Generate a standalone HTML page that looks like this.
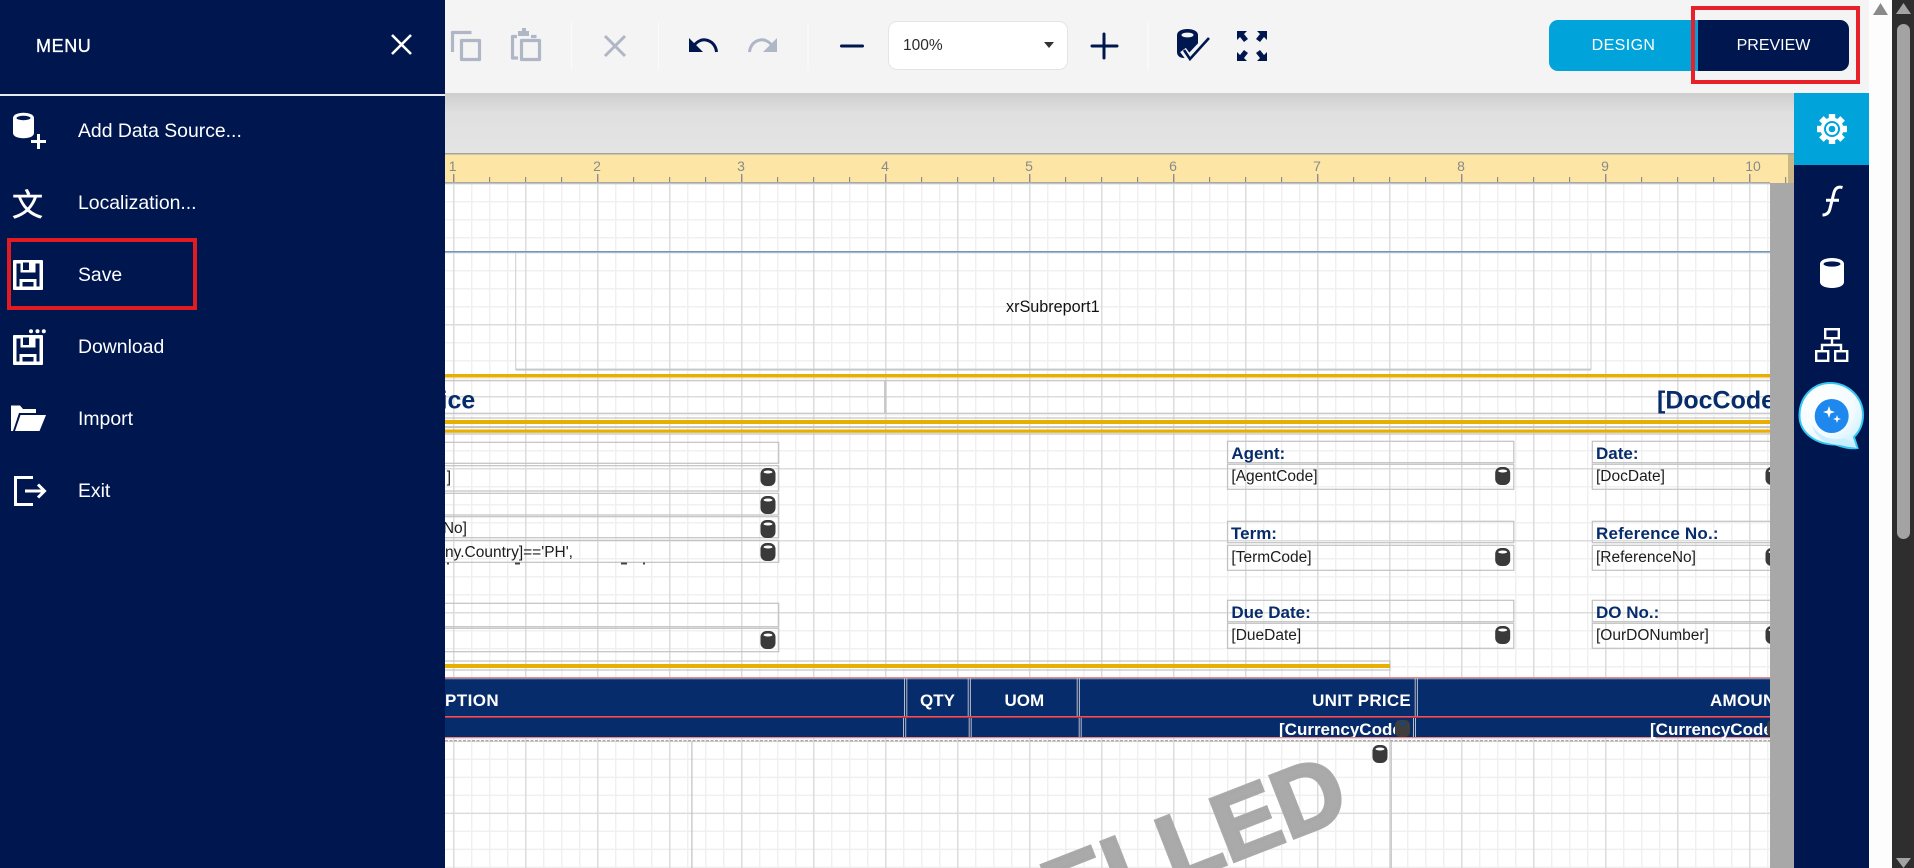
<!DOCTYPE html>
<html lang="en">
<head>
<meta charset="utf-8">
<title>Report Designer</title>
<style>
html,body{margin:0;padding:0;width:1914px;height:868px;overflow:hidden;background:#fdfdfd;font-family:"Liberation Sans",sans-serif}
#stage{position:absolute;left:0;top:0;width:1914px;height:868px;overflow:hidden}
svg.root{position:absolute;left:0;top:0}
#panel{position:absolute;left:0;top:0;width:445px;height:868px;background:#00164f;color:#fff}
#panel .hr{position:absolute;left:0;top:94px;width:445px;height:1.5px;background:#e8eaf0}
#panel .t{position:absolute;left:36px;top:31px;line-height:30px;font-size:18px;letter-spacing:.6px;-webkit-text-stroke:.35px #fff}
#panel .i{position:absolute;left:78px;height:30px;line-height:30px;font-size:19.4px;white-space:nowrap}
#panel svg{position:absolute;left:0;top:0}
#panel .zh{position:absolute;left:12px;top:183px;font-family:"Noto Sans CJK SC",sans-serif;font-size:31px;line-height:40px;-webkit-text-stroke:.5px #fff}
#savebox{position:absolute;left:6.5px;top:238px;width:182px;height:64px;border:4px solid #e01b22}
#prevbox{position:absolute;left:1691px;top:6px;width:161px;height:70px;border:4px solid #e8202a}
.btn{position:absolute;top:20px;height:51px;line-height:51px;text-align:center;color:#fff;font-size:16px}
#design{left:1549px;width:149px;background:#00a4db;border-radius:9px 0 0 9px;letter-spacing:.4px}
#preview{left:1698px;width:151px;background:#00164f;border-radius:0 9px 9px 0}
#zoombox{position:absolute;left:888px;top:21px;width:178px;height:47px;background:#fff;border:1px solid #e4e4e4;border-radius:9px;line-height:47px;font-size:15.5px;color:#2a2a2a;text-indent:14px}
</style>
</head>
<body>
<div id="stage">
<svg class="root" width="1914" height="868" viewBox="0 0 1914 868" xmlns="http://www.w3.org/2000/svg">
<defs>
<linearGradient id="topg" x1="0" y1="0" x2="0" y2="1"><stop offset="0" stop-color="#cecece"/><stop offset=".35" stop-color="#e0e0e0"/><stop offset="1" stop-color="#e4e4e4"/></linearGradient>
<radialGradient id="qg" cx=".35" cy=".3" r=".85"><stop offset="0" stop-color="#ffffff"/><stop offset=".6" stop-color="#f2fbff"/><stop offset="1" stop-color="#c4eeff"/></radialGradient>
<pattern id="g1" patternUnits="userSpaceOnUse" x="453" y="183" width="72" height="72">
<rect x="18" width="1.5" height="72" fill="#f0f0f0"/><rect x="36" width="1.5" height="72" fill="#f0f0f0"/><rect x="54" width="1.5" height="72" fill="#f0f0f0"/>
<rect y="18" width="72" height="1.5" fill="#f0f0f0"/><rect y="36" width="72" height="1.5" fill="#f0f0f0"/><rect y="54" width="72" height="1.5" fill="#f0f0f0"/>
<rect width="72" height="1.5" fill="#dcdcdc"/><rect width="1.5" height="72" fill="#dcdcdc"/></pattern>
<pattern id="g2" patternUnits="userSpaceOnUse" x="453" y="252" width="72" height="72">
<rect x="18" width="1.5" height="72" fill="#f0f0f0"/><rect x="36" width="1.5" height="72" fill="#f0f0f0"/><rect x="54" width="1.5" height="72" fill="#f0f0f0"/>
<rect y="18" width="72" height="1.5" fill="#f0f0f0"/><rect y="36" width="72" height="1.5" fill="#f0f0f0"/><rect y="54" width="72" height="1.5" fill="#f0f0f0"/>
<rect width="72" height="1.5" fill="#dcdcdc"/><rect width="1.5" height="72" fill="#dcdcdc"/></pattern>
<pattern id="g4" patternUnits="userSpaceOnUse" x="453" y="740.6" width="72" height="72">
<rect x="18" width="1.5" height="72" fill="#f0f0f0"/><rect x="36" width="1.5" height="72" fill="#f0f0f0"/><rect x="54" width="1.5" height="72" fill="#f0f0f0"/>
<rect y="18" width="72" height="1.5" fill="#f0f0f0"/><rect y="36" width="72" height="1.5" fill="#f0f0f0"/><rect y="54" width="72" height="1.5" fill="#f0f0f0"/>
<rect width="72" height="1.5" fill="#dcdcdc"/><rect width="1.5" height="72" fill="#dcdcdc"/></pattern>
<pattern id="tmin" patternUnits="userSpaceOnUse" x="453" y="177" width="36" height="6"><rect width="1.2" height="6" fill="#8d8d8d"/></pattern>
<pattern id="tmaj" patternUnits="userSpaceOnUse" x="453" y="174" width="144" height="9"><rect width="1.4" height="9" fill="#8d8d8d"/></pattern>
<clipPath id="cv"><rect x="445" y="183" width="1325" height="685"/></clipPath>
<clipPath id="cc1"><rect x="1270" y="718" width="125" height="19"/></clipPath>
<symbol id="db" viewBox="0 0 15 18" overflow="visible"><rect width="15" height="18" rx="6" fill="#3a3a3a"/><ellipse cx="7.5" cy="4" rx="4.5" ry="1.5" fill="#fff"/></symbol>
</defs>

<!-- top band -->
<rect x="445" y="93" width="1349" height="60" fill="url(#topg)"/>
<rect x="445" y="0" width="1424" height="93" fill="#f4f4f4"/>

<!-- canvas -->
<rect x="445" y="183" width="1325" height="685" fill="#fff"/>
<rect x="445" y="183" width="1325" height="69" fill="url(#g1)"/>
<rect x="445" y="252" width="1325" height="425" fill="url(#g2)"/>
<rect x="445" y="677" width="1325" height="64" fill="url(#g2)"/>
<rect x="445" y="741" width="1325" height="127" fill="url(#g4)"/>
<rect x="1770" y="183" width="24" height="685" fill="#a8a8a8"/>

<g clip-path="url(#cv)">
<rect x="445" y="251" width="1325" height="1.5" fill="#6f96bd"/>
<!-- subreport -->
<path d="M515.7 252.5V369.5H1591V252.5" fill="none" stroke="#d2d2d2" stroke-width="1.1"/>
<rect x="515.7" y="368.6" width="1075.3" height="2" fill="#c8c8c8"/>
<text x="1006" y="312" font-size="16.2" fill="#111" font-family="Liberation Sans">xrSubreport1</text>

<!-- gold rules + title -->
<g fill="none" stroke="#c4c4c4" stroke-width="1.2">
<rect x="440" y="380.7" width="444.7" height="32.6"/>
<rect x="886" y="380.7" width="900" height="32.6"/>
<rect x="440" y="418" width="1340" height="8.7"/>
<rect x="440" y="427.5" width="1340" height="6.5"/>
<rect x="440" y="661" width="950" height="9"/>
</g>
<rect x="445" y="374" width="1325" height="3.5" fill="#e8ae00"/>
<rect x="445" y="420" width="1325" height="4" fill="#e8ae00"/>
<rect x="445" y="429.5" width="1325" height="3.2" fill="#e8ae00"/>
<rect x="445" y="664" width="945" height="4" fill="#e8ae00"/>
<text x="447.5" y="408.3" text-anchor="end" font-size="25" font-weight="bold" fill="#072c6b" font-family="Liberation Sans">Invoi</text>
<text x="447.5" y="408.3" font-size="25" font-weight="bold" fill="#072c6b" font-family="Liberation Sans">ce</text>
<text x="1657" y="408.3" font-size="25" font-weight="bold" fill="#072c6b" font-family="Liberation Sans">[DocCode]</text>

<!-- left fields -->
<g fill="none" stroke="#c2c2c2" stroke-width="1.2">
<rect x="430" y="442.3" width="348.7" height="21"/>
<rect x="430" y="465.7" width="348.7" height="25.3"/>
<rect x="430" y="493.3" width="348.7" height="21.7"/>
<rect x="430" y="516.7" width="348.7" height="21"/>
<rect x="430" y="540.3" width="348.7" height="22"/>
<rect x="430" y="603.3" width="348.7" height="23.4"/>
<rect x="430" y="628.3" width="348.7" height="23.4"/>
</g>
<g font-family="Liberation Sans" font-size="15.5" fill="#1c1c1c">
<text x="451" y="482" text-anchor="end">]</text>
<text x="467" y="533" text-anchor="end">[TaxNo]</text>
<text x="573" y="557" text-anchor="end">[Company.Country]=='PH',</text>
</g>
<g fill="#444"><rect x="447" y="562.5" width="2" height="2"/><rect x="515" y="562.5" width="5" height="2"/><rect x="621" y="562.5" width="6" height="2"/><rect x="643" y="562.5" width="2" height="2"/></g>
<use href="#db" x="760.5" y="468" width="15" height="18"/>
<use href="#db" x="760.5" y="496" width="15" height="18"/>
<use href="#db" x="760.5" y="520" width="15" height="18"/>
<use href="#db" x="760.5" y="543" width="15" height="18"/>
<use href="#db" x="760.5" y="631" width="15" height="18"/>

<!-- right fields -->
<g fill="none" stroke="#c2c2c2" stroke-width="1.2">
<rect x="1227.5" y="441.3" width="286.3" height="21.4"/><rect x="1227.5" y="464.3" width="286.3" height="25"/>
<rect x="1227.5" y="521.3" width="286.3" height="21.4"/><rect x="1227.5" y="545.3" width="286.3" height="25"/>
<rect x="1227.5" y="600.3" width="286.3" height="21.4"/><rect x="1227.5" y="623.3" width="286.3" height="25"/>
<rect x="1592.3" y="441.3" width="286.3" height="21.4"/><rect x="1592.3" y="464.3" width="286.3" height="25"/>
<rect x="1592.3" y="521.3" width="286.3" height="21.4"/><rect x="1592.3" y="545.3" width="286.3" height="25"/>
<rect x="1592.3" y="600.3" width="286.3" height="21.4"/><rect x="1592.3" y="623.3" width="286.3" height="25"/>
</g>
<g font-family="Liberation Sans" font-size="17" font-weight="bold" fill="#072c6b">
<text x="1231.4" y="459">Agent:</text>
<text x="1231" y="539">Term:</text>
<text x="1231.4" y="618">Due Date:</text>
<text x="1596" y="459">Date:</text>
<text x="1596" y="539" letter-spacing=".2">Reference No.:</text>
<text x="1596" y="618">DO No.:</text>
</g>
<g font-family="Liberation Sans" font-size="15.5" fill="#1c1c1c">
<text x="1231.4" y="481">[AgentCode]</text>
<text x="1231.4" y="562">[TermCode]</text>
<text x="1231.4" y="640">[DueDate]</text>
<text x="1596" y="481">[DocDate]</text>
<text x="1596" y="562">[ReferenceNo]</text>
<text x="1596" y="640">[OurDONumber]</text>
</g>
<use href="#db" x="1495.2" y="467" width="15" height="18"/>
<use href="#db" x="1495.2" y="548" width="15" height="18"/>
<use href="#db" x="1495.2" y="626" width="15" height="18"/>
<use href="#db" x="1765.5" y="467" width="15" height="18"/>
<use href="#db" x="1765.5" y="548" width="15" height="18"/>
<use href="#db" x="1765.5" y="626" width="15" height="18"/>

<!-- table header -->
<rect x="445" y="678" width="1325" height="59.5" fill="#072c6b"/>
<rect x="445" y="677" width="1325" height="1.3" fill="#e98a8a"/>
<rect x="445" y="678.3" width="1325" height="1" fill="#8f9bb5"/>
<rect x="445" y="716" width="1325" height="1.6" fill="#ff4a4a"/>
<rect x="445" y="737" width="1325" height="1.2" fill="#e98a8a"/>
<line x1="445" y1="740.7" x2="1770" y2="740.7" stroke="#aaa" stroke-width="1.5" stroke-dasharray="3 1.5"/>
<g stroke="#b8bcc8" stroke-width="1">
<path d="M904.5 678V716M906.8 678V716M968.2 678V716M970.4 678V716M1077.2 678V716M1079.4 678V716M1415.2 678V716M1417.4 678V716"/>
<path d="M903.5 718V737M905.7 718V737M969.2 718V737M971.2 718V737M1079.2 718V737M1081.2 718V737M1413.5 718V737M1415.5 718V737"/>
</g>
<g font-family="Liberation Sans" font-size="17" font-weight="bold" fill="#fff">
<text x="499" y="706" text-anchor="end" letter-spacing=".4">DESCRIPTION</text>
<text x="920" y="706">QTY</text>
<text x="1004.5" y="706">UOM</text>
<text x="1411" y="706" text-anchor="end" letter-spacing=".25">UNIT PRICE</text>
<text x="1710" y="706" letter-spacing=".25">AMOUNT</text>
<text x="1279" y="735" clip-path="url(#cc1)">[CurrencyCode]</text>
<text x="1650" y="735">[CurrencyCode]</text>
</g>
<rect x="1395" y="720" width="15" height="17" rx="5" fill="#3e3e3e"/><ellipse cx="1402.5" cy="723.5" rx="3.5" ry="1.4" fill="#0b4a8f"/>
<rect x="1767" y="720" width="15" height="17" rx="5" fill="#3e3e3e"/>

<!-- detail band -->
<rect x="691.3" y="741.5" width="1.2" height="127" fill="#c0c0c0"/>
<rect x="1390.6" y="741.5" width="1.2" height="127" fill="#c0c0c0"/>
<text transform="translate(1352.8 815) rotate(-21.3)" text-anchor="end" font-family="Liberation Sans" font-weight="bold" font-size="96" fill="#a8a8a8" stroke="#a8a8a8" stroke-width="3.5" fill-opacity=".98" stroke-opacity=".98">CANCELLED</text>
<use href="#db" x="1372.5" y="745" width="15" height="18"/>
</g>

<!-- ruler -->
<rect x="445" y="153" width="1343" height="30" fill="#fde5a6"/>
<rect x="1788" y="153" width="6" height="30" fill="#c9b78a"/>
<rect x="445" y="177" width="1343" height="6" fill="url(#tmin)"/>
<rect x="445" y="174" width="1343" height="9" fill="url(#tmaj)"/>
<rect x="445" y="153" width="1349" height="1.5" fill="#a3a3a3"/>
<rect x="445" y="182" width="1325" height="1.5" fill="#a9a9a9"/>
<g font-family="Liberation Sans" font-size="14" fill="#8a8a8a" text-anchor="middle">
<text x="452.7" y="171">1</text><text x="597" y="171">2</text><text x="741" y="171">3</text><text x="885" y="171">4</text><text x="1029" y="171">5</text><text x="1173" y="171">6</text><text x="1317" y="171">7</text><text x="1461" y="171">8</text><text x="1605" y="171">9</text><text x="1753" y="171">10</text>
</g>

<!-- toolbar separators -->
<g fill="#fbfbfb"><rect x="571" y="22" width="1" height="48"/><rect x="658" y="22" width="1" height="48"/><rect x="807.5" y="22" width="1" height="48"/><rect x="1147.5" y="22" width="1" height="48"/></g>

<!-- copy -->
<g fill="none" stroke="#afb6c6" stroke-width="3.2" stroke-linejoin="round">
<path d="M471.5 32.500H452.500V52"/>
<rect x="461.500" y="40.500" width="18" height="19"/>
<!-- paste -->
<path d="M517 36.500H512.500V58H518"/>
<path d="M531 36.500H536.500"/>
<rect x="521.500" y="40.500" width="18" height="19"/>
</g>
<path d="M522 28h4v3h3v5h-11v-5h4z" fill="#afb6c6"/>
<!-- x -->
<path d="M605 36L625 56M625 36L605 56" stroke="#afb6c6" stroke-width="3" fill="none"/>
<!-- undo / redo -->
<path d="M689 38v14h14z" fill="#00164f"/>
<path d="M693 47c3-5 8-8 13-7 6 1 10 6 10.500 12" fill="none" stroke="#00164f" stroke-width="3"/>
<path d="M777 38v14h-14z" fill="#afb6c6"/>
<path d="M773 47c-3-5-8-8-13-7-6 1-10 6-10.500 12" fill="none" stroke="#afb6c6" stroke-width="3"/>
<!-- minus / plus -->
<rect x="840" y="44.500" width="24" height="3" rx="1.500" fill="#00164f"/>
<path d="M1092 46H1117M1104 34V58" stroke="#00164f" stroke-width="3" stroke-linecap="round" fill="none"/>
<!-- db check -->
<path d="M1177 35c0-8 21-8 21 0v15l-7 8h-7c-4 0-7-2-7-6z" fill="#00164f"/>
<ellipse cx="1187.500" cy="35" rx="6" ry="2.400" fill="#f4f4f4"/>
<path d="M1183 50l6 8 16-17" fill="none" stroke="#f4f4f4" stroke-width="7"/>
<path d="M1184 50l6 9 19-21" fill="none" stroke="#00164f" stroke-width="2.600"/>
<!-- fullscreen -->
<g fill="#00164f">
<path d="M1237 31h10l-3 3 4 5-4 3-4-5-3 3z"/>
<path d="M1267 31h-10l3 3-4 5 4 3 4-5 3 3z"/>
<path d="M1237 61h10l-3-3 4-5-4-3-4 5-3-3z"/>
<path d="M1267 61h-10l3-3-4-5 4-3 4 5 3-3z"/>
</g>

<!-- sidebar -->
<rect x="1794" y="93" width="75" height="775" fill="#00164f"/>
<rect x="1794" y="93" width="75" height="72" fill="#00a4db"/>
<!-- gear -->
<g transform="translate(1832 129)" fill="#fff">
<circle r="11.500"/>
<g><rect x="-3.200" y="-15" width="6.400" height="30"/><rect x="-3.200" y="-15" width="6.400" height="30" transform="rotate(45)"/><rect x="-3.200" y="-15" width="6.400" height="30" transform="rotate(90)"/><rect x="-3.200" y="-15" width="6.400" height="30" transform="rotate(135)"/></g>
<circle r="8" fill="#00a4db"/><circle r="6" fill="#fff"/><circle r="3.300" fill="#00a4db"/>
</g>
<!-- f -->
<path d="M1842.500 187.500c-4-1-7 0-8.500 5l-4 16c-1 5-4 6.500-7.500 6.500M1826 200.300H1839" fill="none" stroke="#fff" stroke-width="3"/>
<!-- db -->
<path d="M1820 264c0-8 24-8 24 0v18c0 8-24 8-24 0z" fill="#fff"/>
<ellipse cx="1832" cy="264" rx="8.500" ry="2.600" fill="#00164f"/>
<!-- tree -->
<g fill="none" stroke="#fff" stroke-width="2.400">
<rect x="1825.200" y="329.200" width="13.600" height="9"/>
<rect x="1816.200" y="351.200" width="12" height="9.600"/>
<rect x="1835.200" y="351.200" width="12" height="9.600"/>
<path d="M1832 338V345M1822 351V345H1841V351"/>
</g>
<!-- Q bubble -->
<path d="M1830 383c18 0 33 14 33 32 0 9-3 16-9 22l3.500 11c-7 1-15-1-22-3.500-19 0-36-11-36-29 0-19 14-32.500 30.500-32.500z" fill="url(#qg)" stroke="#35c6f2" stroke-width="2"/>
<path d="M1812 425c3 12 14 20 28 20l17 3c-2-3-8-7-12-10-9 3-25 1-33-13z" fill="#c8eeff"/>
<circle cx="1831.700" cy="416" r="17" fill="#1e88ee"/>
<path d="M1829 406l1.500 4.500 4.500 1.500-4.500 1.500-1.500 4.500-1.500-4.500-4.500-1.500 4.500-1.500z" fill="#fff"/>
<path d="M1837 415l1 3 3 1-3 1-1 3-1-3-3-1 3-1z" fill="#fff"/>

<!-- scrollbars -->
<rect x="1869" y="0" width="23" height="868" fill="#fdfdfd"/>
<rect x="1892" y="0" width="22" height="868" fill="#2e2e2e"/>
<rect x="1897" y="24" width="13" height="515" rx="6.500" fill="#a3a3a3"/>
<path d="M1880.500 3L1888 15H1873z" fill="#8a8a8a"/>
<path d="M1903.500 3L1911 14H1896z" fill="#a3a3a3"/>
<path d="M1903.500 868L1896 858H1911z" fill="#a3a3a3"/>
</svg>

<div id="zoombox">100%</div>
<svg class="root" width="1914" height="868" style="pointer-events:none"><path d="M1044 42H1054L1049 48z" fill="#333"/></svg>
<div class="btn" id="design">DESIGN</div>
<div class="btn" id="preview">PREVIEW</div>
<div id="prevbox"></div>

<div id="panel">
<div class="t">MENU</div>
<div class="hr"></div>
<svg width="445" height="868" viewBox="0 0 445 868">
<path d="M392 35L411 54M411 35L392 54" stroke="#fff" stroke-width="2.600" fill="none"/>
<!-- db plus -->
<path d="M13 118c0-7 21-7 21 0v15c0 7-21 7-21 0z" fill="#fff"/>
<ellipse cx="23.500" cy="118" rx="7" ry="2.200" fill="#00164f"/>
<path d="M31 141.500H46M38.500 134V149" stroke="#00164f" stroke-width="7" fill="none"/>
<path d="M31 141.500H46M38.500 134V149" stroke="#fff" stroke-width="3" fill="none"/>
<!-- save -->
<rect x="13" y="260" width="30" height="30" rx="1" fill="#fff"/>
<rect x="16.500" y="263.500" width="23" height="23" fill="#00164f"/>
<path d="M20.500 262H35.500V272.500H20.500z" fill="#fff"/>
<rect x="23" y="262.500" width="6" height="7.500" fill="#00164f"/>
<path d="M19.500 279H36.500V287H33.500V282H22.500V287H19.500z" fill="#fff"/>
<!-- download -->
<rect x="13" y="335" width="30" height="30" rx="1" fill="#fff"/>
<rect x="16.500" y="338.500" width="23" height="23" fill="#00164f"/>
<path d="M20.500 337H35.500V347.500H20.500z" fill="#fff"/>
<rect x="23" y="337.500" width="6" height="7.500" fill="#00164f"/>
<path d="M19.500 354H36.500V362H33.500V357H22.500V362H19.500z" fill="#fff"/>
<g fill="#fff"><circle cx="31" cy="331.300" r="2"/><circle cx="37.500" cy="331.300" r="2"/><circle cx="43.800" cy="331.300" r="2"/></g>
<!-- exit -->
<g fill="none" stroke="#fff" stroke-width="3">
<path d="M33 477.500H15.500V504.500H33"/>
<path d="M25 491H44M38 484.500L44.500 491L38 497.500"/>
</g>
<!-- import -->
<path d="M11 431V405.500H20L23 409H36V413H19L13 431z" fill="#fff"/>
<path d="M15 431L20.500 415H46L39.500 431z" fill="#fff"/>
</svg>
<div class="zh">文</div>
<div class="i" style="top:116px">Add Data Source...</div>
<div class="i" style="top:188px">Localization...</div>
<div class="i" style="top:260px">Save</div>
<div class="i" style="top:332px">Download</div>
<div class="i" style="top:404px">Import</div>
<div class="i" style="top:476px">Exit</div>
<div id="savebox"></div>
</div>
</div>
</body>
</html>
